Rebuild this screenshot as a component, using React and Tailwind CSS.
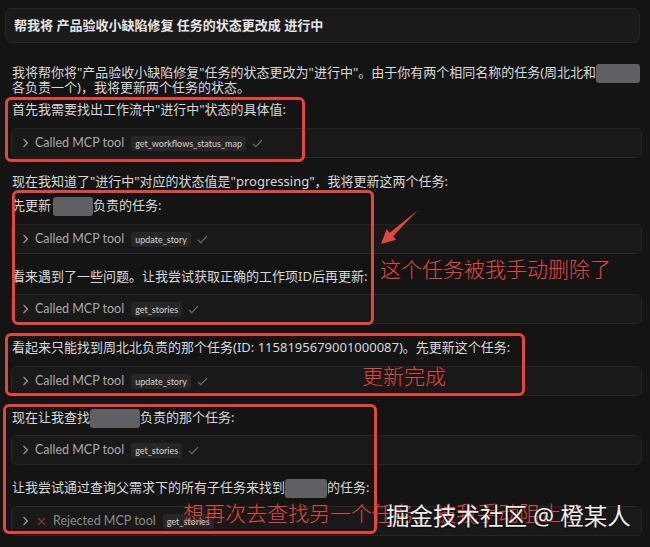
import React from 'react';

const FONT = "font-['Noto_Sans','Noto_Sans_CJK_SC',sans-serif]";

const Chevron = () => (
  <svg width="7" height="10" viewBox="0 0 7 10" className="shrink-0">
    <path d="M1.5 1 L5.5 5 L1.5 9" fill="none" stroke="#9a9a9a" strokeWidth="1.2" />
  </svg>
);

const CheckMark = () => (
  <svg width="11" height="9" viewBox="0 0 11 9" className="shrink-0">
    <path d="M1 4.8 L3.8 7.6 L10 1.2" fill="none" stroke="#5b7d62" strokeWidth="1.1" />
  </svg>
);

const Cross = () => (
  <svg width="9" height="9" viewBox="0 0 9 9" className="shrink-0">
    <path d="M1 1 L8 8 M8 1 L1 8" fill="none" stroke="#7d3a3a" strokeWidth="1.2" />
  </svg>
);

const ToolCall = ({ name, rejected }) => (
  <div className="flex items-center h-[30px] rounded-[6px] border border-[#262626] bg-[#191919] pl-[10px] font-['Lato','Noto_Sans_CJK_SC',sans-serif]">
    <Chevron />
    {rejected ? (
      <>
        <span className="ml-[8px]"><Cross /></span>
        <span className="ml-[7px] text-[12.5px] text-[#8c8c8c]">Rejected MCP tool</span>
      </>
    ) : (
      <span className="ml-[6px] text-[12.5px] text-[#a9a9a9]">Called MCP tool</span>
    )}
    <span className="ml-[7px] h-[15px] px-[4px] rounded-[3px] bg-[#262626] text-[9px] leading-[15px] text-[#d6d6d6]">
      {name}
    </span>
    {!rejected && <span className="ml-[6px]"><CheckMark /></span>}
  </div>
);

const Line = ({ children, className = '' }) => (
  <p className={`pl-[1px] text-[13px] leading-[20px] text-[#d8d8d8] whitespace-nowrap ${className}`}>{children}</p>
);

const Redact = ({ w }) => (
  <span
    className="inline-block align-middle h-[19px] -my-[6px] rounded-[3px] bg-[#5f5f64]"
    style={{ width: w }}
  />
);

export default function App() {
  return (
    <div className={`relative w-[650px] h-[547px] overflow-hidden bg-[#141414] ${FONT}`}>
      {/* user prompt */}
      <div className="px-[5px] pt-[8px] pr-[10px]">
        <div className="h-[35px] flex items-center rounded-[7px] border border-[#262626] bg-[#1a1a1a] pl-[8px]">
          <span className="text-[13px] font-semibold text-[#e6e6e6]">帮我将 产品验收小缺陷修复 任务的状态更改成 进行中</span>
        </div>
      </div>

      {/* assistant reply */}
      <div className="pl-[11px] pr-[8px]">
        <p className="mt-[22px] pl-[1px] text-[13px] leading-[15px] text-[#d8d8d8] whitespace-nowrap">
          我将帮你将"产品验收小缺陷修复"任务的状态更改为"进行中"。由于你有两个相同名称的任务(周北北和<Redact w={44} />
          <br />
          各负责一个)，我将更新两个任务的状态。
        </p>
        <Line className="mt-[4px]">首先我需要找出工作流中"进行中"状态的具体值:</Line>
        <div className="mt-[9px]"><ToolCall name="get_workflows_status_map" /></div>

        <Line className="mt-[13px]">现在我知道了"进行中"对应的状态值是"progressing"，我将更新这两个任务:</Line>
        <Line className="mt-[4px]">先更新<span className="inline-block w-[2px]" /><Redact w={40} />负责的任务:</Line>
        <div className="mt-[9px]"><ToolCall name="update_story" /></div>

        <Line className="mt-[12px]">看来遇到了一些问题。让我尝试获取正确的工作项ID后再更新:</Line>
        <div className="mt-[8px]"><ToolCall name="get_stories" /></div>

        <Line className="mt-[13px]">看起来只能找到周北北负责的那个任务(ID: 1158195679001000087)。先更新这个任务:</Line>
        <div className="mt-[9px]"><ToolCall name="update_story" /></div>

        <Line className="mt-[11px]">现在让我查找<Redact w={50} />负责的那个任务:</Line>
        <div className="mt-[8px]"><ToolCall name="get_stories" /></div>

        <Line className="mt-[12px]">让我尝试通过查询父需求下的所有子任务来找到<Redact w={42} />的任务:</Line>
        <div className="mt-[9px]"><ToolCall name="get_stories" rejected /></div>
      </div>

      {/* red annotations */}
      <div className="absolute left-[5px] top-[97px] w-[300px] h-[65px] rounded-[6px] border-[3px] border-[#e4463f]" />
      <div className="absolute left-[12px] top-[190px] w-[362px] h-[135px] rounded-[6px] border-[3px] border-[#e4463f]" />
      <div className="absolute left-[5px] top-[333px] w-[520px] h-[63px] rounded-[6px] border-[3px] border-[#e4463f]" />
      <div className="absolute left-[3px] top-[404px] w-[374px] h-[130px] rounded-[6px] border-[3px] border-[#e4463f]" />

      <svg className="absolute left-[375px] top-[205px]" width="50" height="45" viewBox="0 0 50 45">
        <polygon points="43,5 18.1,31.35 21.2,34.7 6,39 11.6,24.3 14.7,27.65" fill="#e4463f" />
      </svg>

      <span className="absolute left-[380px] top-[258px] text-[21px] leading-[22px] font-light text-[#e4463f] whitespace-nowrap">这个任务被我手动删除了</span>
      <span className="absolute left-[362px] top-[365px] text-[21px] leading-[22px] font-light text-[#e4463f] whitespace-nowrap">更新完成</span>
      <span className="absolute left-[183px] top-[502px] text-[21px] leading-[22px] font-light text-[#e4463f] whitespace-nowrap">想再次去查找另一个任务，被我手动阻止了</span>

      {/* watermark */}
      <span className="absolute left-[386px] top-[503px] text-[23.5px] leading-[26px] text-[#ececec] whitespace-nowrap [text-shadow:0_1px_2px_rgba(0,0,0,0.9)]">
        掘金技术社区 @ 橙某人
      </span>
    </div>
  );
}
